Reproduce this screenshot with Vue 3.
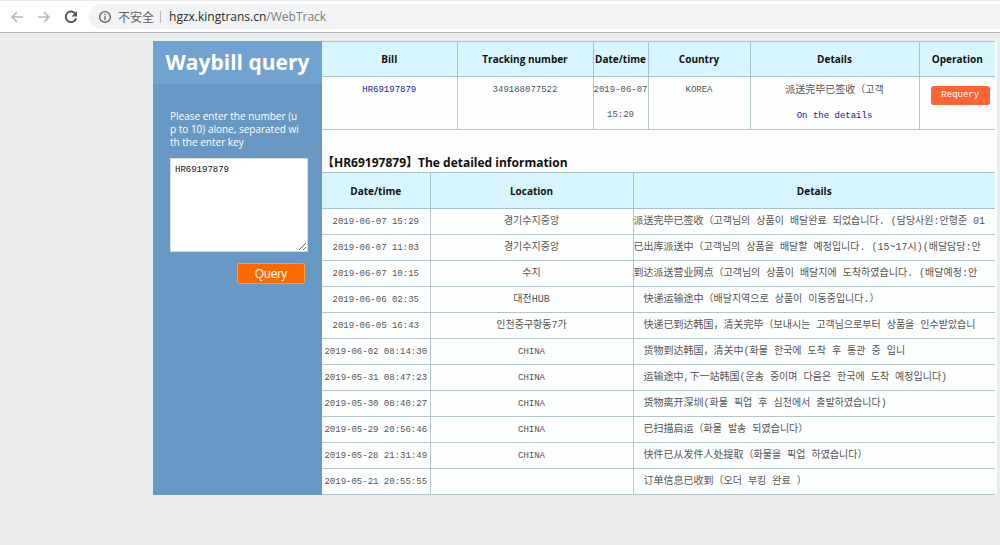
<script setup>
import { ref } from 'vue'

const numbers = ref('HR69197879')
const events = [
  { time: '2019-06-07 15:29', place: '경기수지중앙', text: '派送完毕已签收（고객님의 상품이 배달완료 되었습니다. (담당사원:안형준 01', flush: true },
  { time: '2019-06-07 11:03', place: '경기수지중앙', text: '已出库派送中（고객님의 상품을 배달할 예정입니다. (15~17시)(배달담당:안', flush: true },
  { time: '2019-06-07 10:15', place: '수지', text: '到达派送营业网点（고객님의 상품이 배달지에 도착하였습니다. (배달예정:안', flush: true },
  { time: '2019-06-06 02:35', place: '대전HUB', text: '快递运输途中（배달지역으로 상품이 이동중입니다.）' },
  { time: '2019-06-05 16:43', place: '인천중구항동7가', text: '快递已到达韩国，清关完毕（보내시는 고객님으로부터 상품을 인수받았습니' },
  { time: '2019-06-02 08:14:30', place: 'CHINA', text: '货物到达韩国，清关中(화물 한국에 도착 후 통관 중 입니' },
  { time: '2019-05-31 08:47:23', place: 'CHINA', text: '运输途中,下一站韩国(운송 중이며 다음은 한국에 도착 예정입니다)' },
  { time: '2019-05-30 08:40:27', place: 'CHINA', text: '货物离开深圳(화물 픽업 후 심천에서 출발하였습니다)' },
  { time: '2019-05-29 20:56:46', place: 'CHINA', text: '已扫描启运（화물 발송 되였습니다）' },
  { time: '2019-05-28 21:31:49', place: 'CHINA', text: '快件已从发件人处提取（화물을 픽업 하였습니다）' },
  { time: '2019-05-21 20:55:55', place: '', text: '订单信息已收到（오더 부킹 완료 ）' }
]
const isLatin = (s) => /^[A-Z]+$/.test(s)
</script>

<template>
  <div class="page">
    <header class="toolbar">
      <button class="nav" type="button" aria-label="Back">
        <svg viewBox="0 0 16 16"><path d="M14 8H3M8 3L3 8l5 5" /></svg>
      </button>
      <button class="nav" type="button" aria-label="Forward">
        <svg viewBox="0 0 16 16"><path d="M2 8h11M8 3l5 5-5 5" /></svg>
      </button>
      <button class="nav reload" type="button" aria-label="Reload">
        <svg viewBox="0 0 16 16"><path d="M12.6 5A5.3 5.3 0 1 0 13.2 9.2" /><path class="tip" d="M14 2v5.4H8.6z" /></svg>
      </button>
      <div class="address">
        <svg class="info" viewBox="0 0 14 14"><circle cx="7" cy="7" r="5.4" /><path d="M7 6.3v3.9M7 3.7v1.5" /></svg>
        <span class="unsafe">不安全</span>
        <span class="bar"></span>
        <span class="url">hgzx.kingtrans.cn<span class="path">/WebTrack</span></span>
      </div>
    </header>

    <main class="content">
      <aside class="side">
        <h1>Waybill query</h1>
        <form class="form" @submit.prevent>
          <label for="numbers">Please enter the number (u<br />p to 10) alone, separated wi<br />th the enter key</label>
          <textarea id="numbers" v-model="numbers" spellcheck="false"></textarea>
          <button class="query" type="submit">Query</button>
        </form>
      </aside>

      <section class="results">
        <table class="summary">
          <colgroup>
            <col class="c-bill" /><col class="c-tracking" /><col class="c-date" />
            <col class="c-country" /><col /><col class="c-op" />
          </colgroup>
          <thead>
            <tr>
              <th>Bill</th><th>Tracking number</th><th>Date/time</th>
              <th>Country</th><th>Details</th><th>Operation</th>
            </tr>
          </thead>
          <tbody>
            <tr>
              <td><a href="#">HR69197879</a></td>
              <td>349188077522</td>
              <td>2019-06-07<br />15:29</td>
              <td>KOREA</td>
              <td><span class="cjk">派送完毕已签收（고객</span><br /><a href="#">On the details</a></td>
              <td class="op"><button class="requery" type="button">Requery</button></td>
            </tr>
          </tbody>
        </table>

        <h2>【HR69197879】The detailed information</h2>

        <table class="events">
          <colgroup><col class="c-time" /><col class="c-place" /><col /></colgroup>
          <thead>
            <tr><th>Date/time</th><th>Location</th><th>Details</th></tr>
          </thead>
          <tbody>
            <tr v-for="e in events" :key="e.time">
              <td>{{ e.time }}</td>
              <td :class="{ place: !isLatin(e.place) }">{{ e.place }}</td>
              <td class="text" :class="{ flush: e.flush }">{{ e.text }}</td>
            </tr>
          </tbody>
        </table>
      </section>
    </main>
  </div>
</template>

<style>
body {
  margin: 0;
  background: #eaebeb;
}
</style>

<style scoped>
* {
  box-sizing: border-box;
}
.page {
  min-height: 100vh;
  font-family: "Open Sans", "Noto Sans CJK SC", sans-serif;
  color: #111;
}
.toolbar {
  display: flex;
  align-items: center;
  height: 33px;
  padding-left: 8px;
  background: #fff;
  border-top: 1px solid #e8e8e8;
  border-bottom: 1px solid #b4b4b4;
}
.nav {
  width: 18px;
  height: 18px;
  margin-right: 9px;
  padding: 1px;
  border: 0;
  background: none;
}
.nav svg {
  display: block;
  width: 16px;
  height: 16px;
  fill: none;
  stroke: #b5b6b8;
  stroke-width: 1.6;
}
.reload svg {
  stroke: #55585b;
  stroke-width: 2;
}
.reload .tip {
  fill: #55585b;
  stroke: none;
}
.address {
  display: flex;
  flex: 1;
  align-items: center;
  height: 25px;
  padding-left: 9px;
  border-radius: 13px 0 0 13px;
  background: #f2f3f4;
  font-size: 12px;
}
.info {
  width: 14px;
  height: 14px;
  margin-right: 6px;
  fill: none;
  stroke: #5d6063;
  stroke-width: 1.3;
}
.unsafe {
  color: #5f6366;
}
.bar {
  width: 1px;
  height: 12px;
  margin: 0 8px 0 6px;
  background: #b5b7b9;
}
.url {
  color: #2a2c2f;
}
.path {
  color: #7d8083;
}
.content {
  display: grid;
  grid-template-columns: 169px 1fr;
  margin: 8px 3px 0 153px;
}
.side {
  background: #6799c4;
  color: #fff;
}
h1 {
  margin: 0;
  height: 43px;
  background: #72a3d0;
  font-size: 21px;
  line-height: 43px;
  text-align: center;
}
.form {
  display: flex;
  flex-direction: column;
  padding: 26px 14px 0 17px;
}
label {
  font-size: 10px;
  line-height: 13px;
  white-space: nowrap;
}
textarea {
  width: 138px;
  height: 94px;
  margin-top: 9px;
  padding: 4px;
  border: 1px solid #d5dbe0;
  background: #fff;
  color: #111;
  font: 9px/14px "Liberation Mono", monospace;
}
.query {
  align-self: flex-end;
  width: 68px;
  height: 21px;
  margin: 11px 3px 0 0;
  padding: 0;
  border: 1px solid #f4a040;
  border-radius: 2px;
  background: #ff6a00;
  color: #fff;
  font: 12px/18px "Liberation Sans", sans-serif;
}
.results {
  min-width: 0;
  background: #fdfefe;
  padding-right: 2px;
}
table {
  width: 100%;
  table-layout: fixed;
  border-collapse: collapse;
  border-top: 1px solid #a9c3cc;
  border-bottom: 1px solid #b4c6cc;
}
th {
  height: 35px;
  padding: 0;
  border: 1px solid #a9c3cc;
  background: #d8f6ff;
  font-size: 10px;
  font-weight: 700;
  line-height: 16px;
}
td {
  height: 26px;
  padding: 0;
  border: 1px solid #b4c6cc;
  color: #555;
  font: 9px/16px "Liberation Mono", "Noto Sans CJK SC", "Noto Sans CJK KR", monospace;
  text-align: center;
  white-space: nowrap;
}
th:first-child,
td:first-child {
  border-left: 0;
}
th:last-child,
td:last-child {
  border-right: 0;
}
.summary td {
  height: 51px;
  padding-top: 1px;
  line-height: 25px;
  vertical-align: top;
}
.cjk {
  font-size: 10px;
}
a {
  color: #1414a0;
  text-decoration: none;
}
.c-bill {
  width: 135px;
}
.c-tracking {
  width: 136px;
}
.c-date {
  width: 55px;
}
.c-country {
  width: 102px;
}
.c-op {
  width: 76px;
}
.c-time {
  width: 108px;
}
.c-place {
  width: 203px;
}
.summary td.op {
  padding-left: 6px;
}
.requery {
  width: 59px;
  height: 19px;
  margin-top: 8px;
  padding: 0;
  border: 0;
  border-radius: 3px;
  background: #ff6434;
  color: #fff;
  font: 9px/19px "Liberation Mono", monospace;
}
h2 {
  margin: 0;
  padding-top: 23px;
  font-size: 12px;
  line-height: 19px;
}
.events th {
  height: 36px;
}
.events td.place {
  font-size: 10px;
}
.events td.text {
  overflow: hidden;
  padding-left: 10px;
  font-size: 10px;
  text-align: left;
}
.events td.flush {
  padding-left: 0;
}
</style>
